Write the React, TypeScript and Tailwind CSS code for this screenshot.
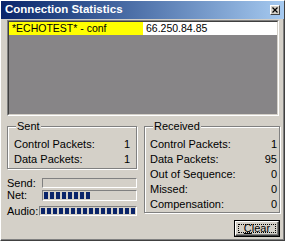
import React from 'react';

const font = { fontFamily: '"Liberation Sans", Arial, sans-serif' };

function Row({ label, value }: { label: string; value: string }) {
    return (
        <div className="flex justify-between h-[15px] leading-[15px]">
            <span>{label}</span>
            <span>{value}</span>
        </div>
    );
}

function GroupBox({ title, children, className }: { title: string; children: React.ReactNode; className: string }) {
    return (
        <div className={`relative border border-[#808080] shadow-[inset_1px_1px_0_#ffffff,1px_1px_0_#ffffff] ${className}`}>
            <span className="absolute -top-[8px] left-[8px] bg-[#d4d0c8] px-[1px] leading-[15px]">{title}</span>
            {children}
        </div>
    );
}

function Meter({ blocks, className }: { blocks: number; className: string }) {
    return (
        <div className={`flex-1 flex items-center gap-[2px] px-[1px] border border-t-[#808080] border-l-[#808080] border-r-white border-b-white ${className}`}>
            {Array.from({ length: blocks }).map((_, i) => (
                <div key={i} className="w-[4px] h-full bg-[#0a246a]" />
            ))}
        </div>
    );
}

export default function App() {
    return (
        <div style={font} className="w-[285px] h-[241px] bg-[#d4d0c8] text-[11px] text-black flex flex-col border border-t-white border-l-white border-r-[#404040] border-b-[#404040] shadow-[inset_-1px_-1px_0_#808080] overflow-hidden">
            {/* title bar */}
            <div className="h-[18px] flex items-center justify-between bg-gradient-to-r from-[#0a246a] to-[#a6caf0] pl-[4px] pr-[4px]">
                <span className="text-white font-bold text-[11.5px] leading-none">Connection Statistics</span>
                <div className="w-[10px] h-[10px] bg-[#d4d0c8] border border-t-white border-l-white border-r-[#404040] border-b-[#404040] flex items-center justify-center">
                    <svg width="6" height="6" viewBox="0 0 6 6">
                        <path d="M0.5 0.5 L5.5 5.5 M5.5 0.5 L0.5 5.5" stroke="#000" strokeWidth="1.2" />
                    </svg>
                </div>
            </div>

            {/* list */}
            <div className="mt-[1px] ml-[6px] w-[272px] h-[96px] border border-t-[#808080] border-l-[#808080] border-r-white border-b-white">
                <div className="h-full border border-t-[#404040] border-l-[#404040] border-r-[#d4d0c8] border-b-[#d4d0c8] bg-[#878587]">
                    <div className="grid grid-cols-[134px_1fr] h-[13px] leading-[13px] bg-white text-[10.5px]">
                        <div className="bg-[#ffff00] pl-[3px]">*ECHOTEST* - conf</div>
                        <div className="pl-[3px]">66.250.84.85</div>
                    </div>
                </div>
            </div>

            {/* bottom */}
            <div className="flex mt-[10px] ml-[5px] gap-[7px]">
                <div className="w-[131px] flex flex-col">
                    <GroupBox title="Sent" className="ml-[1px] pt-[10px] pb-[1px] pl-[6px] pr-[6px]">
                        <Row label="Control Packets:" value="1" />
                        <Row label="Data Packets:" value="1" />
                    </GroupBox>
                    <div className="mt-[8px] flex flex-col pl-[1px]">
                        <div className="flex items-center h-[12px]">
                            <span className="w-[35px] leading-none">Send:</span>
                            <Meter blocks={0} className="h-[10px]" />
                        </div>
                        <div className="flex items-center h-[13px]">
                            <span className="w-[35px] leading-none">Net:</span>
                            <Meter blocks={8} className="h-[11px] py-[1px]" />
                        </div>
                        <div className="flex items-center h-[12px] mt-[3px]">
                            <span className="w-[35px] leading-none">Audio:</span>
                            <Meter blocks={16} className="h-[10px] py-[1px]" />
                        </div>
                    </div>
                </div>
                <div className="w-[136px] flex flex-col">
                    <GroupBox title="Received" className="pt-[10px] pl-[5px] pr-[2px]">
                        <Row label="Control Packets:" value="1" />
                        <Row label="Data Packets:" value="95" />
                        <Row label="Out of Sequence:" value="0" />
                        <Row label="Missed:" value="0" />
                        <Row label="Compensation:" value="0" />
                    </GroupBox>
                    <button className="self-end mt-[7px] w-[46px] h-[17px] border border-black bg-[#d4d0c8] p-0">
                        <div className="w-full h-full border border-t-white border-l-white border-r-[#404040] border-b-[#404040] shadow-[inset_-1px_-1px_0_#808080] p-[2px]">
                            <div className="w-full h-full border border-dotted border-black flex items-center justify-center leading-none text-[11px]">
                                <span><span className="underline">C</span>lear</span>
                            </div>
                        </div>
                    </button>
                </div>
            </div>
        </div>
    );
}
